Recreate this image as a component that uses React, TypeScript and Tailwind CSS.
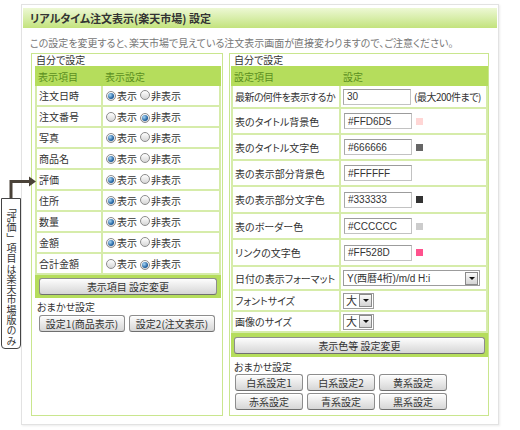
import React from "react";
import clsx from "clsx";

const leftRows: [string, boolean][] = [
  ["注文日時", true],
  ["注文番号", false],
  ["写真", true],
  ["商品名", true],
  ["評価", true],
  ["住所", true],
  ["数量", true],
  ["金額", true],
  ["合計金額", false],
];

const colorRows: { label: string; value: string; swatch: string; h: string }[] = [
  { label: "表のタイトル背景色", value: "#FFD6D5", swatch: "bg-[#ffd6d5]", h: "h-[26px]" },
  { label: "表のタイトル文字色", value: "#666666", swatch: "bg-[#666666]", h: "h-[26px]" },
  { label: "表の表示部分背景色", value: "#FFFFFF", swatch: "bg-[#ffffff]", h: "h-[26px]" },
  { label: "表の表示部分文字色", value: "#333333", swatch: "bg-[#333333]", h: "h-[27px]" },
  { label: "表のボーダー色", value: "#CCCCCC", swatch: "bg-[#cccccc]", h: "h-[26px]" },
  { label: "リンクの文字色", value: "#FF528D", swatch: "bg-[#ff528d]", h: "h-[27px]" },
];

function Radio({ on }: { on?: boolean }) {
  return (
    <span className="inline-flex h-[10px] w-[10px] shrink-0 items-center justify-center rounded-full border border-[#8c8c8c] bg-linear-to-b from-[#ffffff] to-[#d6d6d6]">
      {on && (
        <span className="h-[6px] w-[6px] rounded-full bg-[radial-gradient(circle_at_35%_35%,#a8d8f8,#1f5f9e_65%)]" />
      )}
    </span>
  );
}

function Btn({ children, className }: { children: React.ReactNode; className?: string }) {
  return (
    <button
      className={clsx(
        "flex h-[17px] items-center justify-center rounded-[3px] border border-[#8d8d8d] border-b-[#6f6f6f] bg-linear-to-b from-[#fdfdfd] to-[#d6d6d6] text-[10px] leading-none text-[#333] shadow-[inset_0_1px_0_#fff]",
        className
      )}
    >
      {children}
    </button>
  );
}

function Box({ children, className }: { children: React.ReactNode; className?: string }) {
  return (
    <div
      className={clsx(
        "flex h-[16px] shrink-0 items-center border border-[#c2c2c2] border-t-[#9c9c9c] border-l-[#a8a8a8] bg-white px-[3px] font-['Liberation_Sans','Noto_Sans_CJK_JP',sans-serif] text-[10px] text-[#333]",
        className
      )}
    >
      {children}
    </div>
  );
}

function Arrow() {
  return (
    <span className="flex h-[13px] w-[13px] items-center justify-center border border-[#8a8a8a] bg-linear-to-b from-[#fafafa] to-[#d4d4d4]">
      <span className="h-0 w-0 border-x-[3px] border-t-[3px] border-x-transparent border-t-[#111]" />
    </span>
  );
}

export default function App() {
  return (
    <div className="relative h-[430px] w-[520px] bg-white pl-[21px] pt-[4px] font-['Noto_Sans_CJK_JP',sans-serif] text-[#333] [font-feature-settings:'palt']">
      <div className="w-[478px] border border-[#e2e2e2] bg-white px-[1px] pt-[3px] pb-[8px] shadow-[1px_1px_2px_rgba(0,0,0,0.08)]">
        <div className="flex h-[20px] items-center bg-linear-to-b from-[#edf8d4] to-[#c3e37c] pl-[7px] text-[11px] font-bold text-[#333]">
          リアルタイム注文表示(楽天市場) 設定
        </div>
        <div className="flex h-[25px] items-center pl-[7px] pt-[3px] text-[10px] text-[#777]">
          この設定を変更すると、楽天市場で見えている注文表示画面が直接変わりますので、ご注意ください。
        </div>

        <div className="ml-[8px] flex h-[363px] gap-[6px]">
          {/* left cell */}
          <div className="w-[192px] border border-[#c9e68e] pl-[3px] pr-[1px]">
            <div className="h-[12px] pl-[1px] text-[10px] leading-[12px]">自分で設定</div>
            <div className="grid h-[20px] grid-cols-[66px_1fr] items-center bg-[#b5dd5c] text-[10px] text-[#5b8f1f]">
              <span className="pl-[3px]">表示項目</span>
              <span className="pl-[4px]">表示設定</span>
            </div>
            {leftRows.map(([name, on]) => (
              <div
                key={name}
                className="grid h-[21px] grid-cols-[66px_1fr] border-x-2 border-b-2 border-[#d6ecaa] text-[10px]"
              >
                <span className="flex items-center border-r-2 border-[#d6ecaa] pl-[2px]">{name}</span>
                <span className="flex items-center pl-[3px]">
                  <Radio on={on} />
                  <span className="ml-[1px]">表示</span>
                  <span className="ml-[3px]">
                    <Radio on={!on} />
                  </span>
                  <span className="ml-[1px]">非表示</span>
                </span>
              </div>
            ))}
            <div className="h-[23px] bg-[#b5dd5c] px-[4px] pt-[3px]">
              <Btn className="w-full text-[#4f8a17]">表示項目 設定変更</Btn>
            </div>
            <div className="mt-[2px] h-[13px] pl-[2px] text-[10px] leading-[13px]">おまかせ設定</div>
            <div className="mt-[2px] flex gap-[4px] pl-[4px]">
              <Btn className="w-[86px]">設定1(商品表示)</Btn>
              <Btn className="w-[86px]">設定2(注文表示)</Btn>
            </div>
          </div>

          {/* right cell */}
          <div className="w-[260px] border border-[#c9e68e] pl-[1px]">
            <div className="h-[12px] pl-[3px] text-[10px] leading-[12px]">自分で設定</div>
            <div className="grid h-[20px] grid-cols-[108px_1fr] items-center bg-[#b5dd5c] text-[10px] text-[#5b8f1f]">
              <span className="pl-[3px]">設定項目</span>
              <span className="pl-[4px]">設定</span>
            </div>
            <div className="grid h-[23px] grid-cols-[108px_1fr] border-x-2 border-b-2 border-[#d6ecaa] text-[10px]">
              <span className="flex items-center whitespace-nowrap border-r-2 border-[#d6ecaa] pl-[2px] tracking-[-0.6px]">
                最新の何件を表示するか
              </span>
              <span className="flex items-center whitespace-nowrap pl-[2px]">
                <Box className="w-[68px]">30</Box>
                <span className="ml-[3px] tracking-[-0.5px]">(最大200件まで)</span>
              </span>
            </div>
            {colorRows.map((r) => (
              <div
                key={r.label}
                className={clsx("grid grid-cols-[108px_1fr] border-x-2 border-b-2 border-[#d6ecaa] text-[10px]", r.h)}
              >
                <span className="flex items-center border-r-2 border-[#d6ecaa] pl-[2px]">{r.label}</span>
                <span className="flex items-center pl-[3px]">
                  <Box className="w-[68px]">{r.value}</Box>
                  <span className={clsx("ml-[4px] h-[7px] w-[7px]", r.swatch)} />
                </span>
              </div>
            ))}
            <div className="grid h-[24px] grid-cols-[108px_1fr] border-x-2 border-b-2 border-[#d6ecaa] text-[10px]">
              <span className="flex items-center whitespace-nowrap border-r-2 border-[#d6ecaa] pl-[2px]">日付の表示フォーマット</span>
              <span className="flex items-center pl-[2px]">
                <div className="flex h-[16px] w-[137px] items-center justify-between border border-[#9c9c9c] bg-white pl-[3px] pr-[1px] font-['Liberation_Sans','Noto_Sans_CJK_JP',sans-serif] text-[10px]">
                  <span>Y(西暦4桁)/m/d H:i</span>
                  <Arrow />
                </div>
              </span>
            </div>
            {["フォントサイズ", "画像のサイズ"].map((l) => (
              <div
                key={l}
                className="grid h-[21px] grid-cols-[108px_1fr] border-x-2 border-b-2 border-[#d6ecaa] text-[10px]"
              >
                <span className="flex items-center border-r-2 border-[#d6ecaa] pl-[2px]">{l}</span>
                <span className="flex items-center pl-[2px]">
                  <div className="flex h-[16px] items-center gap-[2px] border border-[#9c9c9c] bg-white pl-[2px] pr-[1px] text-[11px]">
                    <span>大</span>
                    <Arrow />
                  </div>
                </span>
              </div>
            ))}
            <div className="h-[24px] bg-[#b5dd5c] px-[3px] pt-[4px]">
              <Btn className="h-[16px] w-full text-[#4f8a17]">表示色等 設定変更</Btn>
            </div>
            <div className="mt-[3px] h-[13px] pl-[3px] text-[10px] leading-[13px]">おまかせ設定</div>
            <div className="mt-[1px] grid grid-cols-[68px_68px_68px] gap-x-[4px] gap-y-[2px] pl-[4px]">
              {["白系設定1", "白系設定2", "黄系設定", "赤系設定", "青系設定", "黒系設定"].map((t) => (
                <Btn key={t}>{t}</Btn>
              ))}
            </div>
          </div>
        </div>
      </div>

      {/* callout */}
      <svg className="absolute left-0 top-[174px]" width="40" height="26" viewBox="0 0 40 26">
        <path d="M11 26 V7.5 H30" fill="none" stroke="#4a4238" strokeWidth="3" />
        <path d="M29 2.5 L36 7.5 L29 12.5 Z" fill="#4a4238" />
      </svg>
      <div className="absolute left-[1px] top-[198px] flex h-[151px] w-[20px] justify-center rounded-b-[4px] border border-[#444] bg-white pt-[3px]">
        <div className="whitespace-nowrap text-[10px] leading-[18px] tracking-[0.3px] text-[#333] [writing-mode:vertical-rl] [text-orientation:upright] [font-feature-settings:normal]">
          「評価」項目は楽天市場版のみ
        </div>
      </div>
    </div>
  );
}
